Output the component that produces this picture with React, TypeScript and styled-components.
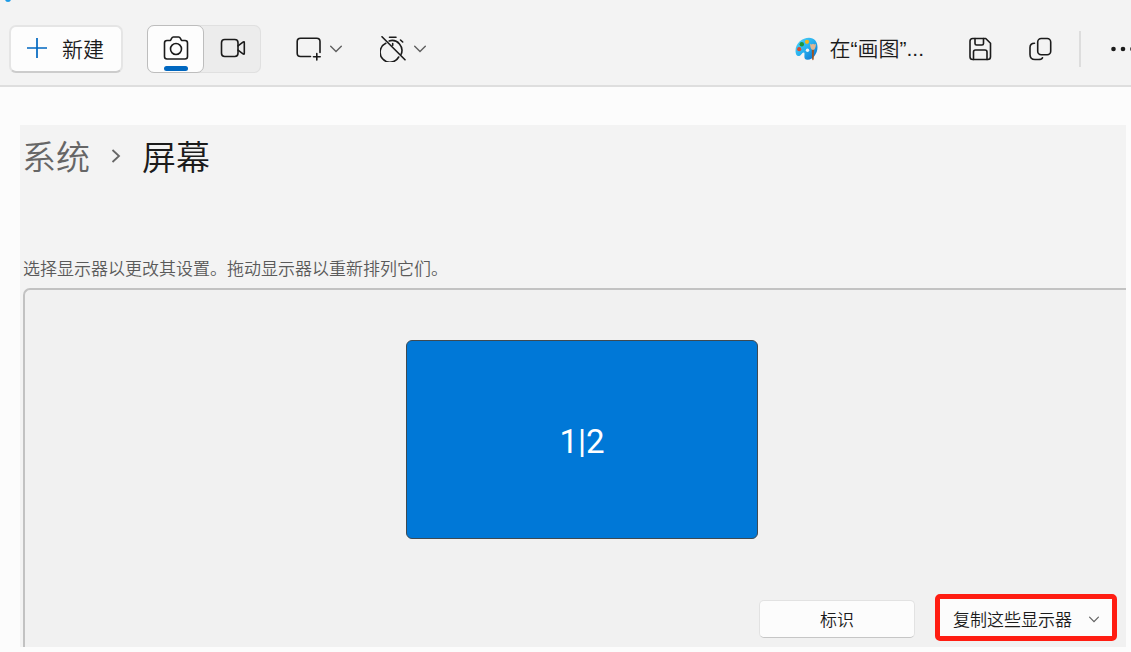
import React from "react";
import styled, { createGlobalStyle } from "styled-components";

const GlobalStyle = createGlobalStyle`
  * { box-sizing: border-box; }
  html, body, #root { min-height: 100vh; }
  body {
    margin: 0;
    background: #fcfcfc;
    color: #1b1b1b;
    font-family: "Noto Sans CJK SC", "Noto Sans", sans-serif;
    font-weight: 350;
    overflow-x: hidden;
  }
  button, select { font: inherit; color: inherit; margin: 0; padding: 0; }
  svg { display: block; flex: none; }
`;

const Page = styled.div`
  display: flex;
  flex-direction: column;
  min-height: 100vh;
`;

const Toolbar = styled.header`
  position: relative;
  display: flex;
  align-items: center;
  justify-content: space-between;
  height: 87px;
  padding: 12px 0 0 9px;
  background: #f3f3f3;
  border-bottom: 2px solid #dedede;
  overflow: hidden;
`;

const Accent = styled.span`
  position: absolute;
  top: -4px;
  left: 5px;
  width: 6px;
  height: 6px;
  border-radius: 3px;
  background: #1c9be6;
`;

const Group = styled.div<{ $gap: number }>`
  display: flex;
  align-items: center;
  gap: ${(p) => p.$gap}px;
`;

const NewButton = styled.button`
  display: flex;
  align-items: center;
  gap: 15px;
  width: 114px;
  height: 48px;
  padding: 0 16px 2px;
  border: 2px solid #e5e5e5;
  border-bottom-color: #cccccc;
  border-radius: 7px;
  background: #fdfdfd;
  font-size: 21px;
  line-height: 32px;
  white-space: nowrap;
`;

const Segmented = styled.div`
  display: flex;
  width: 114px;
  height: 48px;
  margin-right: 11px;
  border-radius: 7px;
  background: #ececec;
  box-shadow: inset 0 0 0 1px #e0e0e0;
`;

const Segment = styled.button<{ $active?: boolean }>`
  position: relative;
  flex: 1;
  display: flex;
  align-items: center;
  justify-content: center;
  border: 1px solid ${(p) => (p.$active ? "#bdbdbd" : "transparent")};
  border-radius: 7px;
  background: ${(p) => (p.$active ? "#fdfdfd" : "transparent")};
  padding-bottom: 2px;
`;

const Indicator = styled.span`
  position: absolute;
  bottom: 1px;
  width: 24px;
  height: 5px;
  border-radius: 3px;
  background: #0067c0;
`;

const ToolButton = styled.button<{ $gap?: number }>`
  display: flex;
  align-items: center;
  gap: ${(p) => p.$gap ?? 0}px;
  border: 0;
  background: transparent;
`;

const PaintButton = styled(ToolButton)`
  padding-right: 8px;
  font-family: "Liberation Sans", "Noto Sans CJK SC", sans-serif;
  font-size: 21px;
  line-height: 32px;
  white-space: nowrap;
`;

const Divider = styled.span`
  width: 2px;
  height: 36px;
  margin-left: -10px;
  margin-right: -8px;
  background: #dddddd;
`;

const Settings = styled.main`
  flex: 1;
  display: flex;
  flex-direction: column;
  margin: 38px 5px 5px 20px;
  padding-left: 3px;
  background: #f3f3f3;
`;

const Breadcrumb = styled.nav`
  display: flex;
  align-items: center;
  height: 62px;
  gap: 21px;
  margin-left: -1px;
  font-size: 34px;
  line-height: 48px;
`;

const Crumb = styled.a`
  color: #666666;
  text-decoration: none;
`;

const Current = styled.h1`
  margin: 0;
  font-size: 34px;
  line-height: 48px;
  font-weight: inherit;
`;

const Hint = styled.p`
  margin: 68px 0 8px;
  font-size: 17px;
  line-height: 25px;
  color: #5a5a5a;
`;

const Arrangement = styled.section`
  flex: 1;
  display: flex;
  flex-direction: column;
  align-items: center;
  justify-content: space-between;
  padding: 50px 9px 6px 22px;
  border-top: 2px solid #c2c2c2;
  border-left: 2px solid #c2c2c2;
  border-top-left-radius: 7px;
  background: #f1f1f1;
`;

const Monitor = styled.button`
  width: 352px;
  height: 199px;
  padding-top: 4px;
  border: 1px solid #3e4a52;
  border-radius: 6px;
  background: #0078d7;
  color: #ffffff;
  font-family: Roboto, sans-serif;
  font-size: 33px;
  line-height: 44px;
  font-weight: 400;
`;

const Actions = styled.div`
  display: flex;
  align-items: flex-end;
  align-self: flex-end;
  gap: 20px;
`;

const IdentifyButton = styled.button`
  width: 156px;
  height: 38px;
  margin-bottom: 3px;
  padding-bottom: 2px;
  border: 1px solid #e2e2e2;
  border-bottom-color: #c6c6c6;
  border-radius: 5px;
  background: #fcfcfc;
  font-size: 17px;
  line-height: 25px;
`;

const Highlight = styled.label`
  position: relative;
  display: flex;
  width: 182px;
  height: 47px;
  border: 5px solid #ff1d12;
  border-radius: 5px;
  background: #fcfcfc;
`;

const ModeSelect = styled.select`
  appearance: none;
  flex: 1;
  min-width: 0;
  padding: 2px 30px 0 13px;
  border: 0;
  border-radius: 3px;
  background: #fcfcfc;
  font-size: 17px;
`;

const SelectArrow = styled.span`
  position: absolute;
  top: 17px;
  right: 13px;
  pointer-events: none;
`;

const line = {
  fill: "none",
  stroke: "#1b1b1b",
  strokeWidth: 1.6,
  strokeLinecap: "round" as const,
  strokeLinejoin: "round" as const,
};

const PlusIcon = () => (
  <svg width="20" height="20" viewBox="0 0 20 20">
    <path d="M10 0v20M0 10h20" fill="none" stroke="#0067c0" strokeWidth="1.7" />
  </svg>
);

const CameraIcon = () => (
  <svg width="26" height="24" viewBox="0 0 26 24" {...line}>
    <path d="M4 4.5h3.500l1.200-2.400Q9.200 1 10.400 1h5.200q1.200 0 1.700 1.100l1.200 2.400H22q2.500 0 2.500 2.500V20.500q0 2.500-2.500 2.500H4q-2.500 0-2.500-2.500V7q0-2.500 2.500-2.500z" />
    <circle cx="13" cy="13" r="5.500" />
  </svg>
);

const VideoIcon = () => (
  <svg width="26" height="20" viewBox="0 0 26 20" {...line}>
    <rect x="1.500" y="1.500" width="16.500" height="17" rx="3.200" />
    <path d="M18 7.800l5-3.700q1.300-.8 1.300.6v10.600q0 1.400-1.300.6l-5-3.700" />
  </svg>
);

const SnipIcon = () => (
  <svg width="26" height="26" viewBox="0 0 26 26" {...line}>
    <path d="M14.500 20.500H4.500q-3.300 0-3.300-3.300V5.500q0-3.300 3.300-3.300h16.200q3.300 0 3.300 3.300v11" />
    <path d="M20.800 17.500v6.500M17.500 20.700h6.700" />
  </svg>
);

const TimerOffIcon = () => (
  <svg width="26" height="26" viewBox="0 0 26 26" {...line}>
    <path d="M9.500 1.200h6.500M20.500 4l2.200 2" />
    <path d="M9.200 4.900A9.900 9.900 0 0 1 21 18.500M18.700 21A9.900 9.900 0 1 1 5.800 7.300" />
    <path d="M12.700 7.500v1.800M2 .8l23 23" />
  </svg>
);

const ChevronDown = ({ size = 12 }: { size?: number }) => (
  <svg width={size} height={size * 0.5 + 2} viewBox="0 0 12 8">
    <path d="M.7 1.200L6 6.500l5.300-5.300" fill="none" stroke="#606060" strokeWidth="1.4" strokeLinecap="round" />
  </svg>
);

const ChevronRight = () => (
  <svg width="10" height="14" viewBox="0 0 10 14">
    <path d="M1.500 1l6.500 6-6.500 6" fill="none" stroke="#666666" strokeWidth="1.8" />
  </svg>
);

const PaintIcon = () => (
  <svg width="23" height="24" viewBox="0 0 23 24">
    <defs>
      <linearGradient id="palette" x1="0" y1="0" x2="1" y2="1">
        <stop offset="0" stopColor="#55d8fb" />
        <stop offset=".5" stopColor="#25aeee" />
        <stop offset="1" stopColor="#0869c9" />
      </linearGradient>
    </defs>
    <path
      d="M14 .8C7.500.8.5 6 .5 14c0 3 1.200 5 3 5 2.800 0 3.200-3.600 5.200-3.600 2.400 0-1.900 7.300 4 7.300 5 0 9.800-6 9.800-12.500C22.500 4.500 19.200.8 14 .8z"
      fill="url(#palette)"
    />
    <circle cx="12.500" cy="13.200" r="1.700" fill="#f3f3f3" />
    <circle cx="12" cy="4.800" r="2.100" fill="#f5b51b" />
    <circle cx="6.800" cy="7.200" r="2.200" fill="#1c963b" />
    <circle cx="4.200" cy="12.200" r="2.100" fill="#d94c2c" />
    <path d="M16.800 12.500h2.200l-.3 9.500q-.8 2.600-1.600 0z" fill="#9b5525" />
    <path d="M15.200 6.800l1.500.6 1.300-.6 1.400.6 1.400-.6c.2 2.400-.4 4.400-1.700 6h-2.200c-1.300-1.600-1.900-3.600-1.700-6z" fill="#dfb793" />
  </svg>
);

const SaveIcon = () => (
  <svg width="23" height="24" viewBox="0 0 23 24" {...line}>
    <path d="M3.700 1.500h13l4.800 4.800V19.700q0 2.800-2.800 2.800h-15q-2.700 0-2.700-2.800V4.300q0-2.800 2.700-2.800z" />
    <path d="M6 1.500v5q0 1.500 1.500 1.500H13q1.500 0 1.500-1.500v-5M4.500 22.500V15q0-2 2-2h9.500q2 0 2 2v7.500" />
  </svg>
);

const CopyIcon = () => (
  <svg width="23" height="24" viewBox="0 0 23 24" {...line}>
    <rect x="8.700" y="1.500" width="13" height="16.300" rx="3.500" />
    <path d="M5.500 6.200Q1 6.200 1 10.500v7q0 5 5 5h3.200q3.800 0 4.300-1.800" />
  </svg>
);

const MoreIcon = () => (
  <svg width="21" height="6" viewBox="0 0 21 6" fill="#1b1b1b">
    <circle cx="3.500" cy="3" r="2.300" />
    <circle cx="13" cy="3" r="2.300" />
    <circle cx="22.500" cy="3" r="2.300" />
  </svg>
);

export default function App() {
  return (
    <Page>
      <GlobalStyle />
      <Toolbar>
        <Accent />
        <Group $gap={24}>
          <NewButton type="button">
            <PlusIcon />
            新建
          </NewButton>
          <Segmented>
            <Segment type="button" $active aria-label="截图">
              <CameraIcon />
              <Indicator />
            </Segment>
            <Segment type="button" aria-label="录制">
              <VideoIcon />
            </Segment>
          </Segmented>
          <Group $gap={38}>
            <ToolButton type="button" $gap={8} aria-label="截图模式">
              <SnipIcon />
              <ChevronDown />
            </ToolButton>
            <ToolButton type="button" $gap={8} aria-label="延迟">
              <TimerOffIcon />
              <ChevronDown />
            </ToolButton>
          </Group>
        </Group>
        <Group $gap={37}>
          <PaintButton type="button" $gap={12}>
            <PaintIcon />
            在“画图”...
          </PaintButton>
          <ToolButton type="button" aria-label="保存">
            <SaveIcon />
          </ToolButton>
          <ToolButton type="button" aria-label="复制">
            <CopyIcon />
          </ToolButton>
          <Divider />
          <ToolButton type="button" aria-label="更多">
            <MoreIcon />
          </ToolButton>
        </Group>
      </Toolbar>
      <Settings>
        <Breadcrumb>
          <Crumb href="#system">系统</Crumb>
          <ChevronRight />
          <Current>屏幕</Current>
        </Breadcrumb>
        <Hint>选择显示器以更改其设置。拖动显示器以重新排列它们。</Hint>
        <Arrangement>
          <Monitor type="button">1|2</Monitor>
          <Actions>
            <IdentifyButton type="button">标识</IdentifyButton>
            <Highlight>
              <ModeSelect aria-label="多显示器模式" defaultValue="duplicate">
                <option value="duplicate">复制这些显示器</option>
              </ModeSelect>
              <SelectArrow>
                <ChevronDown size={10} />
              </SelectArrow>
            </Highlight>
          </Actions>
        </Arrangement>
      </Settings>
    </Page>
  );
}
